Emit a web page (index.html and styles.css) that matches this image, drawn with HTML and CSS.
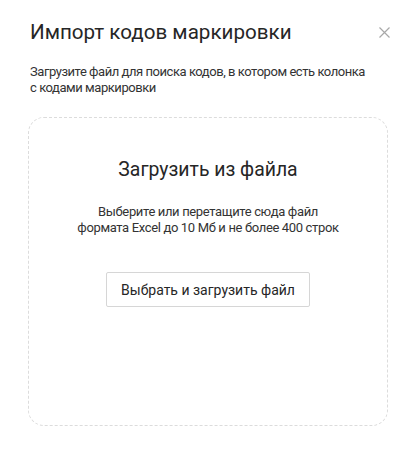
FILE: index.html
```html
<!DOCTYPE html>
<html lang="ru">
<head>
<meta charset="utf-8">
<link rel="stylesheet" href="styles.css">
</head>
<body>
<div class="modal">
  <div class="header">
    <h1 class="title">Импорт кодов маркировки</h1>
    <button class="close" aria-label="Закрыть">
      <svg width="11" height="11" viewBox="0 0 11 11"><path d="M0.5 0.5L10.5 10.5M10.5 0.5L0.5 10.5" stroke="#a8a8a8" stroke-width="1.2" fill="none"/></svg>
    </button>
  </div>
  <p class="lead">Загрузите файл для поиска кодов, в котором есть колонка<br>с кодами маркировки</p>
  <div class="dropzone">
    <h2 class="dz-title">Загрузить из файла</h2>
    <p class="dz-text">Выберите или перетащите сюда файл<br>формата Excel до 10 Мб и не более 400 строк</p>
    <button class="upload">Выбрать и загрузить файл</button>
  </div>
</div>
</body>
</html>
```
FILE: styles.css
```css
* { box-sizing: border-box; }
html, body { margin: 0; padding: 0; background: #fff; }
body { font-family: Roboto, "Noto Sans", sans-serif; color: #222; }
.modal { width: 419px; padding: 20px 31px 0 30px; }
.header { display: flex; justify-content: space-between; align-items: center; height: 24px; }
.title { margin: 0; font-size: 20.6px; font-weight: 400; color: #262626; line-height: 24px; }
.close { border: 0; background: none; padding: 0; width: 11px; height: 11px; display: flex; margin-right: -2px; }
.lead { margin: 20px 0 0; font-size: 13px; letter-spacing: -0.45px; line-height: 16px; color: #333; width: 345px; }
.dropzone { margin: 21px 0 0 -2px; width: 360px; height: 309px; border: 1px dashed #dcdcdc; border-radius: 16px; display: flex; flex-direction: column; align-items: center; padding-top: 40px; }
.dz-title { margin: 0; font-size: 19.4px; font-weight: 400; line-height: 24px; color: #262626; }
.dz-text { margin: 22px 0 0; font-size: 13px; letter-spacing: -0.35px; line-height: 16px; text-align: center; color: #333; }
.upload { margin-top: 36px; font-family: inherit; font-size: 14px; color: #262626; background: #fff; border: 1px solid #d6d6d6; border-radius: 2px; height: 35px; width: 204px; padding: 0; }
```
